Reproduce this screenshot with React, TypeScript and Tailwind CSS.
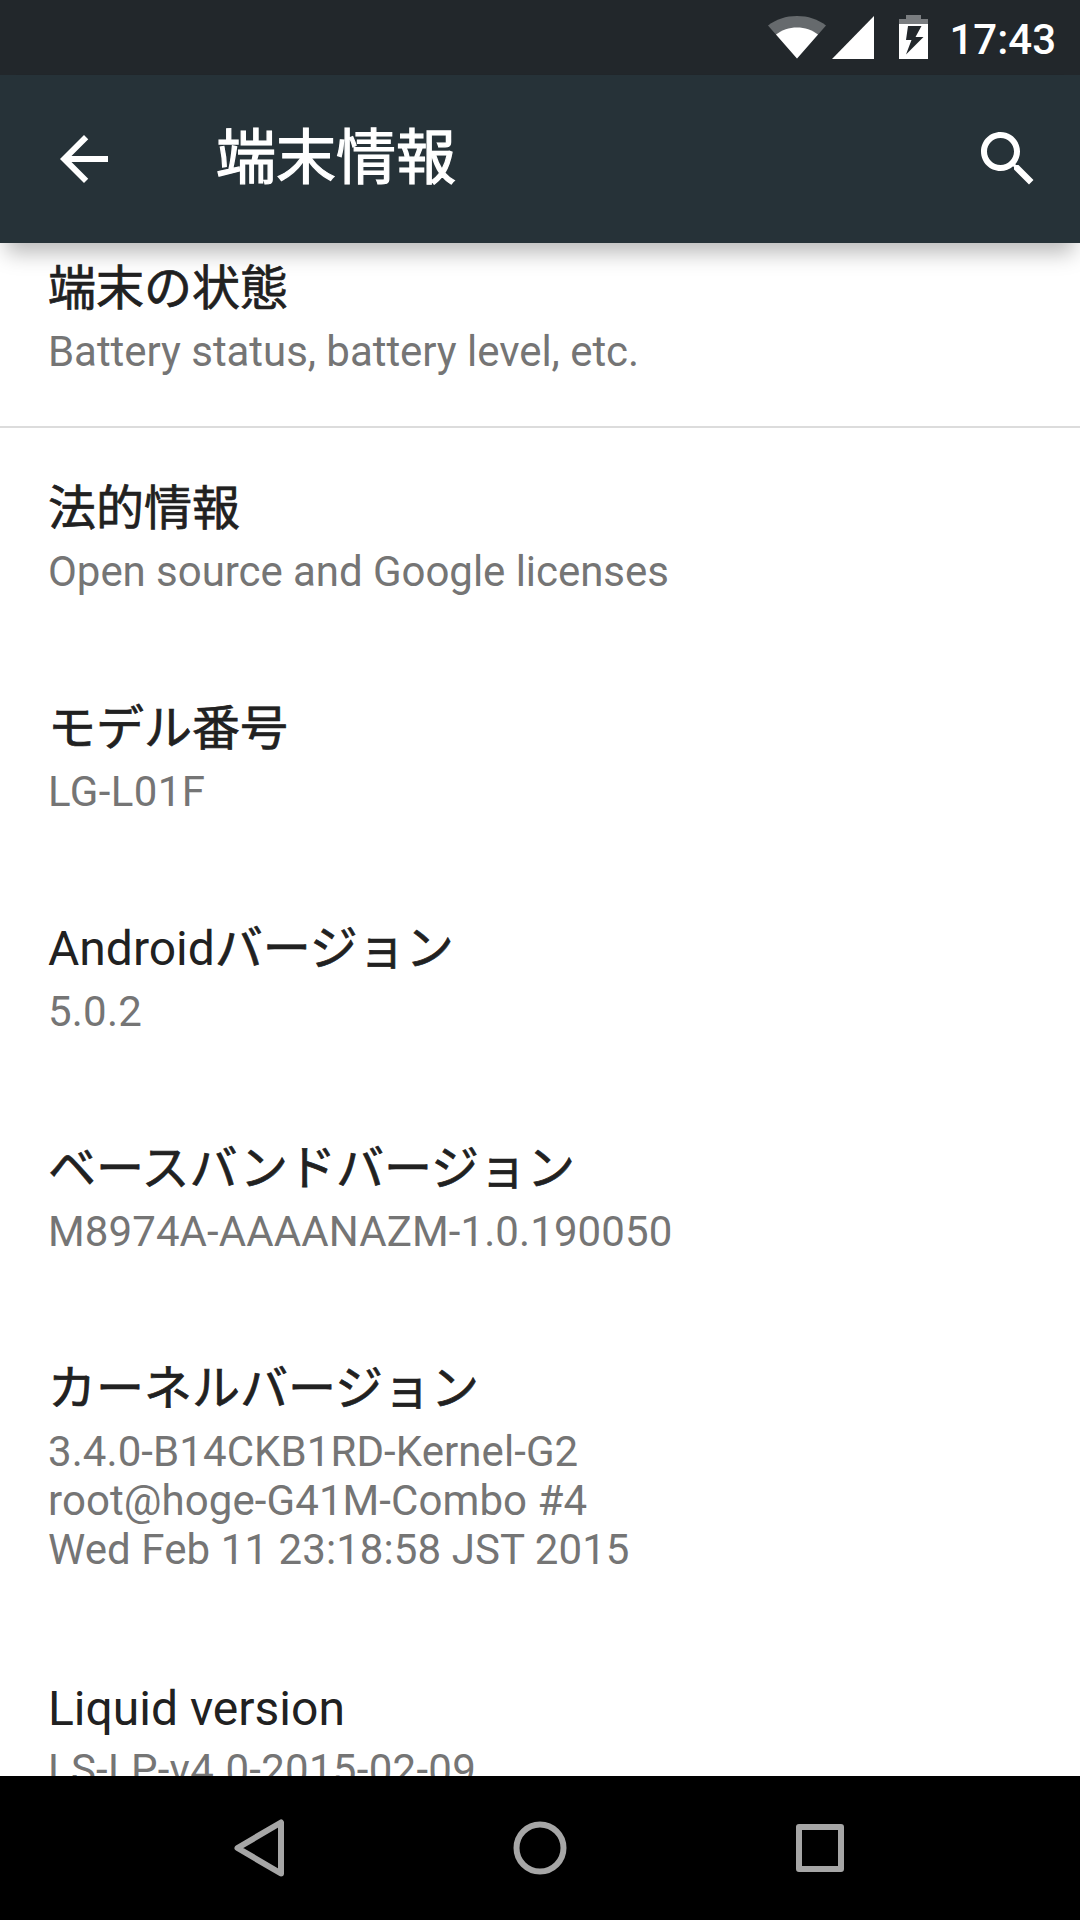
import React from "react";

const items = [
  {
    title: "端末の状態",
    summary: ["Battery status, battery level, etc."],
    tracking: "tracking-[-0.05px]",
    divider: true,
  },
  {
    title: "法的情報",
    summary: ["Open source and Google licenses"],
    tracking: "tracking-[-0.05px]",
  },
  { title: "モデル番号", summary: ["LG-L01F"], tracking: "tracking-[0.4px]" },
  { title: "Androidバージョン", summary: ["5.0.2"], tracking: "tracking-[0.2px]" },
  {
    title: "ベースバンドバージョン",
    summary: ["M8974A-AAAANAZM-1.0.190050"],
    tracking: "tracking-[0.1px]",
  },
  {
    title: "カーネルバージョン",
    summary: [
      "3.4.0-B14CKB1RD-Kernel-G2",
      "root@hoge-G41M-Combo #4",
      "Wed Feb 11 23:18:58 JST 2015",
    ],
    tracking: "tracking-[0.08px]",
  },
  {
    title: "Liquid version",
    summary: ["LS-LP-v4.0-2015-02-09"],
    tracking: "tracking-[0.28px]",
    latin: true,
  },
];

// Thickens the kana and kanji, leaves latin letters as they are
const Title = ({ text }: { text: string }) => (
  <>
    {text.split(/([A-Za-z ]+)/).map((part, i) =>
      i % 2 ? (
        part
      ) : (
        <span key={i} className="[-webkit-text-stroke:0.7px_#212121]">
          {part}
        </span>
      )
    )}
  </>
);

const StatusBar = () => (
  <div className="h-[75px] shrink-0 bg-[#22272b] flex items-start justify-end pr-[24px]">
    {/* Wifi */}
    <svg className="mt-[16px] mr-[6px]" width="58" height="43" viewBox="0 0 58 43">
      <path fill="#666a6d" d="M0 9.5C8 3.3 18 0 29 0s21 3.3 29 9.5L29 42.5z" />
      <path fill="#fff" d="M8 18.5C14 14 21 11.5 29 11.5s15 2.5 21 7L29 42.5z" />
    </svg>
    {/* Signal */}
    <svg className="mt-[16px] mr-[25px]" width="42" height="43" viewBox="0 0 42 43">
      <path fill="#fff" d="M42 0v43H0z" />
    </svg>
    {/* Battery, charging */}
    <svg className="mt-[15px] mr-[21px]" width="29" height="44" viewBox="0 0 29 44">
      <path fill="#7a7d80" d="M7 0h15v4h7v5H0V4h7z" />
      <path fill="#fff" d="M0 9h29v35H0z" />
      <path fill="#22272b" d="M9 11h13.5l-6 11h8L7 39.5l5.500-14.500H7z" />
    </svg>
    <span className="text-[42px] leading-[49px] mt-[15px] font-medium text-white">17:43</span>
  </div>
);

const ActionBar = () => (
  <header className="relative z-10 h-[168px] shrink-0 bg-[#263238] flex items-center pl-[48px] pr-[36px] shadow-[0_16px_20px_-6px_rgba(0,0,0,0.27)]">
    <svg width="72" height="72" viewBox="0 0 24 24" fill="#fff">
      <path d="M20 11H7.830l5.590-5.590L12 4l-8 8 8 8 1.410-1.410L7.830 13H20v-2z" />
    </svg>
    <h1 className="ml-[96px] text-[60px] leading-[80px] text-white [-webkit-text-stroke:1.2px_#fff]">
      端末情報
    </h1>
    <svg className="ml-auto" width="72" height="72" viewBox="0 0 24 24" fill="#fff">
      <path d="M15.500 14h-.790l-.280-.270C15.410 12.590 16 11.110 16 9.500 16 5.910 13.090 3 9.500 3S3 5.910 3 9.500 5.910 16 9.500 16c1.610 0 3.090-.590 4.230-1.570l.270.280v.790l5 4.990L20.490 19l-4.990-5zm-6 0C7.010 14 5 11.990 5 9.500S7.010 5 9.500 5 14 7.010 14 9.500 11.990 14 9.500 14z" />
    </svg>
  </header>
);

const NavBar = () => (
  <nav className="h-[144px] shrink-0 bg-black flex items-center justify-center gap-[184px]">
    <svg width="96" height="96" viewBox="0 0 96 96" fill="none" stroke="#a6a6a6" strokeWidth="6" strokeLinejoin="round">
      <path d="M69 22.500v51L25.500 48z" />
    </svg>
    <svg width="96" height="96" viewBox="0 0 96 96" fill="none" stroke="#a6a6a6" strokeWidth="6">
      <circle cx="48" cy="48" r="23.500" />
    </svg>
    <svg width="96" height="96" viewBox="0 0 96 96" fill="none" stroke="#a6a6a6" strokeWidth="6" strokeLinejoin="round">
      <path d="M27 27h42v42H27z" />
    </svg>
  </nav>
);

export default function App() {
  return (
    <div
      lang="ja"
      className="w-[1080px] h-[1920px] flex flex-col overflow-hidden bg-white font-[Roboto,'Noto_Sans_CJK_JP',sans-serif]"
    >
      <StatusBar />
      <ActionBar />
      <main className="flex-1 min-h-0 overflow-hidden">
        {items.map((item) => (
          <section
            key={item.title}
            className={`px-[48px] pb-[52px] ${
              item.divider
                ? "pt-[13px] h-[185px] border-b-2 border-[#dcdcdc]"
                : item.latin
                  ? "pt-[50px]"
                  : "pt-[48px]"
            }`}
          >
            <h2
              className={`text-[48px] leading-[66px] text-[#212121] ${
                item.latin ? "mb-[3px]" : "mb-[5px]"
              }`}
            >
              <Title text={item.title} />
            </h2>
            {item.summary.map((line) => (
              <p key={line} className={`text-[42px] leading-[49px] text-[#757575] ${item.tracking}`}>
                {line}
              </p>
            ))}
          </section>
        ))}
      </main>
      <NavBar />
    </div>
  );
}
